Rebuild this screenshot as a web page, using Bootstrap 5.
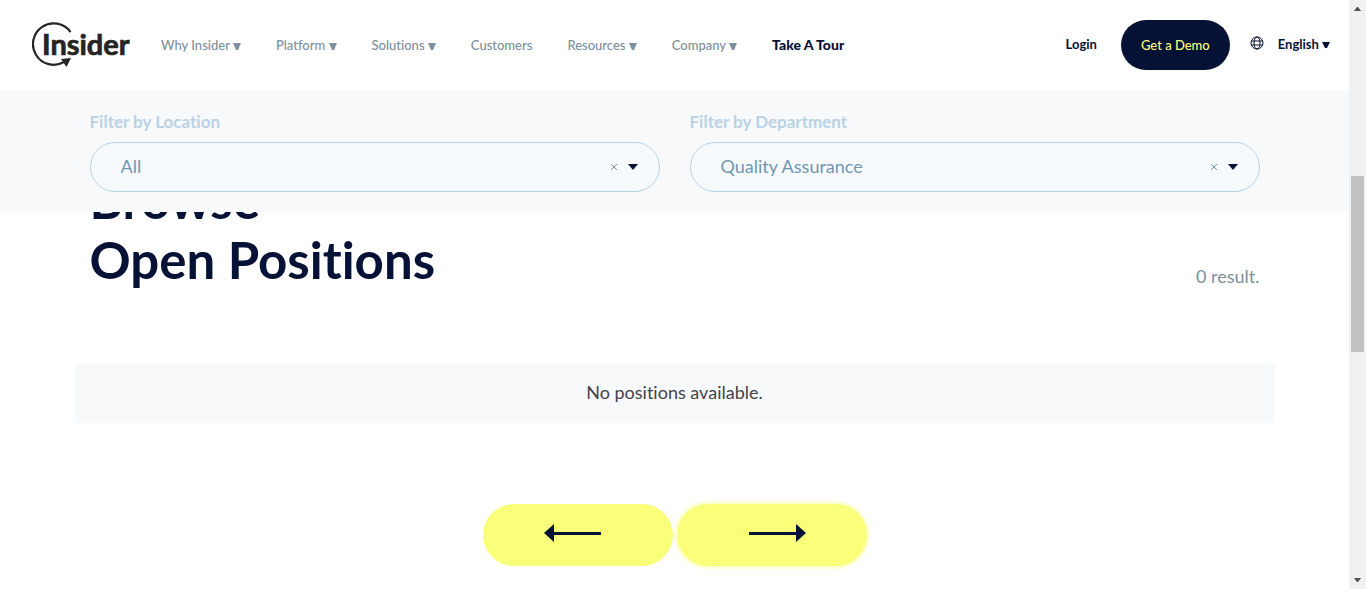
<!DOCTYPE html>
<html lang="en">
<head>
<meta charset="utf-8">
<meta name="viewport" content="width=device-width, initial-scale=1">
<title>Insider - Open Positions</title>
<link href="https://cdn.jsdelivr.net/npm/bootstrap@5.3.0/dist/css/bootstrap.min.css" rel="stylesheet">
<style>
  :root { --navy: #051135; --slate: #7d8f9d; --mist: #f8f9fb; --sky: #b9d2e4; --lime: #f9ff79; }
  body { font-family: Lato, "Open Sans", sans-serif; font-variant-ligatures: none; color: var(--navy); background: #fff; }
  .site-header { min-height: 90px; padding: 0 19px 0 32px; background: #fff; z-index: 3; }
  .site-nav { gap: 35px; margin-left: 31px; }
  .site-nav a, .header-tools a, .header-tools button { font-size: 13px; line-height: 20px; font-weight: 500; text-decoration: none; white-space: nowrap; }
  .site-nav svg, .lang-btn svg { vertical-align: baseline; }
  .site-nav a { color: var(--slate); }
  .site-nav a.tour-link { color: var(--navy); font-size: 14px; font-weight: 900; }
  .header-tools { gap: 14px; }
  .header-tools a, .lang-btn { color: var(--navy); }
  .header-tools .side-item { padding-bottom: 3px; }
  .header-tools .btn-demo { background: var(--navy); color: var(--lime); border-radius: 25px; padding: 15px 20px; margin: 0 6px 0 10px; }
  .wrap { max-width: 1200px; padding: 0 15px; margin: 0 auto; width: 100%; }
  .filter-band { background: var(--mist); padding: 20px 0; z-index: 2; }
  .filter-row { --bs-gutter-x: 30px; }
  .filter-label { display: block; font-size: 17px; line-height: 24px; font-weight: 700; color: var(--sky); margin-bottom: 8px; }
  .filter-select { width: 100%; height: 50px; padding: 0 60px 2px 30px; border: 1px solid var(--sky); border-radius: 25px; background: #f6fafd; color: #7396b0; font-size: 18px; appearance: none; }
  .filter-icons { right: 22px; gap: 10px; }
  .jobs-title { font-size: 51px; line-height: 60px; font-weight: 700; margin: -42px 0 0; }
  .result-count { font-size: 18px; line-height: 28px; color: var(--slate); }
  .empty-panel { max-width: 1200px; margin: 73px auto 0; padding: 15px 16px 17px; background: var(--mist); border-radius: 2px; font-size: 18px; line-height: 28px; color: #42434b; }
  .pager { gap: 4px; margin-top: 81px; padding-bottom: 20px; }
  .pager-btn { width: 190px; height: 62px; border: 0; border-radius: 31px; background: var(--lime); padding: 0 10px 7px 0; }
  .pager-btn.current { box-shadow: 0 0 0 3px #fdffd2; padding: 0 0 7px 10px; }
  .scroll-rail { width: 17px; height: 100vh; top: 0; background: #f1f1f1; }
  .scroll-thumb { flex: 176; width: 13px; background: #c1c1c1; }
  .rail-above { flex: 159; }
  .rail-below { flex: 220; }
</style>
</head>
<body>
<div class="d-flex min-vh-100">
  <div class="flex-grow-1">
    <header class="site-header d-flex align-items-center position-relative">
      <a href="#" aria-label="Insider home">
        <svg class="d-block" width="98" height="46" viewBox="0 0 98 46" fill="none">
          <path d="M38.500 10 A20.700 20.700 0 1 0 32 40" stroke="#252525" stroke-width="2.200"/>
          <path d="M29 37 L39 36 L34.500 45 Z" fill="#252525"/>
          <text x="10" y="33" font-family="Lato, sans-serif" font-size="29" font-weight="700" fill="#252525" stroke="#252525" stroke-width="0.700">Insider</text>
        </svg>
      </a>
      <nav class="site-nav d-flex" aria-label="Main">
        <a href="#">Why Insider <svg width="8" height="8" viewBox="0 0 8 8"><path d="M0 1H8L5 8H3Z" fill="currentColor"/></svg></a>
        <a href="#">Platform <svg width="8" height="8" viewBox="0 0 8 8"><path d="M0 1H8L5 8H3Z" fill="currentColor"/></svg></a>
        <a href="#">Solutions <svg width="8" height="8" viewBox="0 0 8 8"><path d="M0 1H8L5 8H3Z" fill="currentColor"/></svg></a>
        <a href="#">Customers</a>
        <a href="#">Resources <svg width="8" height="8" viewBox="0 0 8 8"><path d="M0 1H8L5 8H3Z" fill="currentColor"/></svg></a>
        <a href="#">Company <svg width="8" height="8" viewBox="0 0 8 8"><path d="M0 1H8L5 8H3Z" fill="currentColor"/></svg></a>
        <a href="#" class="tour-link">Take A Tour</a>
      </nav>
      <div class="header-tools d-flex align-items-center ms-auto">
        <a href="#" class="side-item fw-bold">Login</a>
        <a href="#" class="btn-demo">Get a Demo</a>
        <svg class="mb-1" width="14" height="14" viewBox="0 0 14 14" fill="none" stroke="#051135"><circle cx="7" cy="7" r="6"/><ellipse cx="7" cy="7" rx="3" ry="6"/><path d="M1 5H13M1 9H13"/></svg>
        <button type="button" class="lang-btn side-item border-0 bg-transparent px-0 pt-0 fw-bold">English <svg width="8" height="8" viewBox="0 0 8 8"><path d="M0 1H8L5 7H3Z" fill="currentColor"/></svg></button>
      </div>
    </header>

    <section class="filter-band position-relative">
      <div class="wrap">
        <div class="row filter-row">
          <div class="col-6">
            <label class="filter-label" for="location">Filter by Location</label>
            <div class="position-relative d-flex align-items-center">
              <select id="location" class="filter-select"><option>All</option></select>
              <div class="filter-icons position-absolute d-flex align-items-center">
                <button type="button" class="border-0 bg-transparent p-0 d-flex" aria-label="Clear location"><svg width="8" height="8" viewBox="0 0 8 8"><path d="M1 1L7 7M7 1L1 7" stroke="#7396b0"/></svg></button>
                <svg width="10" height="6" viewBox="0 0 10 6"><path d="M0 0H10L5 6Z" fill="#051135"/></svg>
              </div>
            </div>
          </div>
          <div class="col-6">
            <label class="filter-label" for="department">Filter by Department</label>
            <div class="position-relative d-flex align-items-center">
              <select id="department" class="filter-select"><option>Quality Assurance</option></select>
              <div class="filter-icons position-absolute d-flex align-items-center">
                <button type="button" class="border-0 bg-transparent p-0 d-flex" aria-label="Clear department"><svg width="8" height="8" viewBox="0 0 8 8"><path d="M1 1L7 7M7 1L1 7" stroke="#7396b0"/></svg></button>
                <svg width="10" height="6" viewBox="0 0 10 6"><path d="M0 0H10L5 6Z" fill="#051135"/></svg>
              </div>
            </div>
          </div>
        </div>
      </div>
    </section>

    <main>
      <div class="wrap d-flex justify-content-between align-items-end">
        <h1 class="jobs-title">Browse<br>Open Positions</h1>
        <span class="result-count">0 result.</span>
      </div>
      <div class="empty-panel text-center">No positions available.</div>
      <div class="pager d-flex justify-content-center">
        <button type="button" class="pager-btn" aria-label="Previous page">
          <svg width="58" height="18" viewBox="0 0 58 18" fill="#051135"><path d="M0 9L10 0V8H57V11H10V18Z"/></svg>
        </button>
        <button type="button" class="pager-btn current" aria-label="Next page">
          <svg width="58" height="18" viewBox="0 0 58 18" fill="#051135"><path d="M58 9L48 0V8H1V11H48V18Z"/></svg>
        </button>
      </div>
    </main>
  </div>

  <div class="scroll-rail d-flex flex-column align-items-center flex-shrink-0 position-sticky" aria-hidden="true">
    <svg width="17" height="17" viewBox="0 0 17 17"><path d="M5 11H12L9 7H8Z" fill="#505050"/></svg>
    <div class="rail-above"></div>
    <div class="scroll-thumb"></div>
    <div class="rail-below"></div>
    <svg width="17" height="17" viewBox="0 0 17 17"><path d="M5 6H12L9 10H8Z" fill="#505050"/></svg>
  </div>
</div>
<script src="https://cdn.jsdelivr.net/npm/bootstrap@5.3.0/dist/js/bootstrap.bundle.min.js"></script>
</body>
</html>
